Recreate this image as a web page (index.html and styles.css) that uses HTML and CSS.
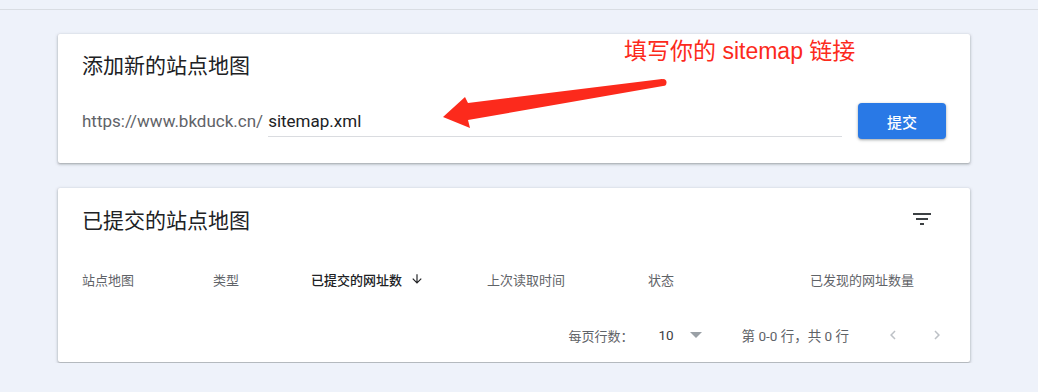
FILE: index.html
```html
<!DOCTYPE html>
<html lang="zh-CN">
<head>
    <meta charset="UTF-8">
    <meta name="viewport" content="width=device-width, initial-scale=1.0">
    <title>站点地图</title>
    <link rel="stylesheet" href="styles.css">
</head>
<body>
    <div class="topbar"></div>

    <main class="content">
        <section class="card add-card">
            <h2 class="card-title">添加新的站点地图</h2>
            <div class="input-row">
                <span class="prefix">https://www.bkduck.cn/</span>
                <input class="sitemap-input" type="text" value="sitemap.xml">
                <button class="submit-btn">提交</button>
            </div>

            <!-- 标注 -->
            <div class="note">填写你的 sitemap 链接</div>
            <svg class="note-arrow" viewBox="0 0 912 129" width="912" height="129">
                <polygon points="604,45 410,69 407,63 385,83 412,94 410,86 605,52" fill="#fc2a1c"/>
                <circle cx="605" cy="48.5" r="3.5" fill="#fc2a1c"/>
            </svg>
        </section>

        <section class="card list-card">
            <div class="list-header">
                <h2 class="card-title">已提交的站点地图</h2>
                <svg class="filter-icon" viewBox="0 0 24 24" width="24" height="24">
                    <path d="M10 18h4v-2h-4v2zM3 6v2h18V6H3zm3 7h12v-2H6v2z" fill="currentColor"/>
                </svg>
            </div>

            <div class="table-head">
                <span class="col">站点地图</span>
                <span class="col">类型</span>
                <span class="col active">已提交的网址数
                    <svg class="sort-icon" viewBox="0 0 24 24" width="14" height="14">
                        <path d="M20 12l-1.41-1.41L13 16.17V4h-2v12.17l-5.58-5.59L4 12l8 8 8-8z" fill="currentColor"/>
                    </svg>
                </span>
                <span class="col">上次读取时间</span>
                <span class="col">状态</span>
                <span class="col">已发现的网址数量</span>
            </div>

            <div class="table-footer">
                <span class="rows-label">每页行数：</span>
                <span class="rows-value">10</span>
                <svg class="drop-icon" viewBox="0 0 12 6" width="12" height="6">
                    <path d="M0 0h12L6 6z" fill="currentColor"/>
                </svg>
                <span class="range">第 0-0 行，共 0 行</span>
                <svg class="page-icon prev" viewBox="0 0 24 24" width="18" height="18">
                    <path d="M15.41 7.41L14 6l-6 6 6 6 1.41-1.41L10.83 12z" fill="currentColor"/>
                </svg>
                <svg class="page-icon next" viewBox="0 0 24 24" width="18" height="18">
                    <path d="M10 6L8.59 7.41 13.17 12l-4.58 4.59L10 18l6-6z" fill="currentColor"/>
                </svg>
            </div>
        </section>
    </main>
</body>
</html>
```

FILE: styles.css
```css
* {
    margin: 0;
    padding: 0;
    box-sizing: border-box;
}

body {
    background-color: #eef2fa;
    font-family: Roboto, "Noto Sans CJK SC", sans-serif;
    color: #202124;
}

.topbar {
    height: 10px;
    border-bottom: 1px solid #d9dde3;
}

.content {
    width: 912px;
    margin-left: 58px;
    padding-top: 24px;
}

.card {
    position: relative;
    background: white;
    border-radius: 2px;
    box-shadow: 0 1px 2px rgba(60, 64, 67, 0.3), 0 1px 3px 1px rgba(60, 64, 67, 0.15);
    padding: 19px 24px 24px;
}

.card-title {
    font-size: 21px;
    font-weight: 400;
    line-height: 26px;
    color: #202124;
}

.input-row {
    display: flex;
    align-items: center;
    margin-top: 24px;
    height: 36px;
}

.prefix {
    font-size: 17px;
    color: #5f6368;
    margin-right: 5px;
}

.sitemap-input {
    flex: 1;
    height: 31px;
    border: none;
    border-bottom: 1px solid #dadce0;
    outline: none;
    font-family: inherit;
    font-size: 17px;
    color: #202124;
    background: transparent;
    margin-right: 16px;
}

.submit-btn {
    width: 88px;
    height: 36px;
    border: none;
    border-radius: 4px;
    background-color: #2979e6;
    color: white;
    font-family: inherit;
    font-size: 15px;
    font-weight: 500;
    box-shadow: 0 1px 2px rgba(60, 64, 67, 0.3), 0 1px 3px 1px rgba(60, 64, 67, 0.15);
}

.note {
    position: absolute;
    left: 566px;
    top: 3px;
    font-family: "Liberation Sans", "Noto Sans CJK SC", sans-serif;
    font-size: 23px;
    line-height: 28px;
    color: #fc2a1c;
}

.note-arrow {
    position: absolute;
    left: 0;
    top: 0;
    pointer-events: none;
}

.list-card {
    margin-top: 25px;
    padding-top: 20px;
    padding-bottom: 0;
}

.list-header {
    display: flex;
    justify-content: space-between;
    align-items: center;
    height: 26px;
}

.filter-icon {
    color: #3c4043;
    margin-right: 12px;
    margin-top: -4px;
}

.table-head {
    display: grid;
    grid-template-columns: 131px 98px 176px 161px 162px 1fr;
    align-items: center;
    height: 48px;
    margin-top: 21px;
    font-size: 13px;
    color: #5f6368;
}

.col.active {
    display: flex;
    align-items: center;
    color: #202124;
    font-weight: 500;
}

.sort-icon {
    margin-left: 8px;
}

.table-footer {
    display: flex;
    justify-content: flex-end;
    align-items: center;
    height: 54px;
    margin-top: 5px;
    margin-bottom: 1px;
    font-size: 13px;
    color: #5f6368;
}

.rows-value {
    margin-left: 25px;
    color: #3c4043;
    font-size: 13.5px;
}

.drop-icon {
    margin-left: 16px;
    color: #9aa0a6;
}

.range {
    margin-left: 40px;
    font-size: 13.5px;
}

.page-icon {
    color: #bdc1c6;
}

.page-icon.prev {
    margin-left: 35px;
}

.page-icon.next {
    margin-left: 26px;
}
```
